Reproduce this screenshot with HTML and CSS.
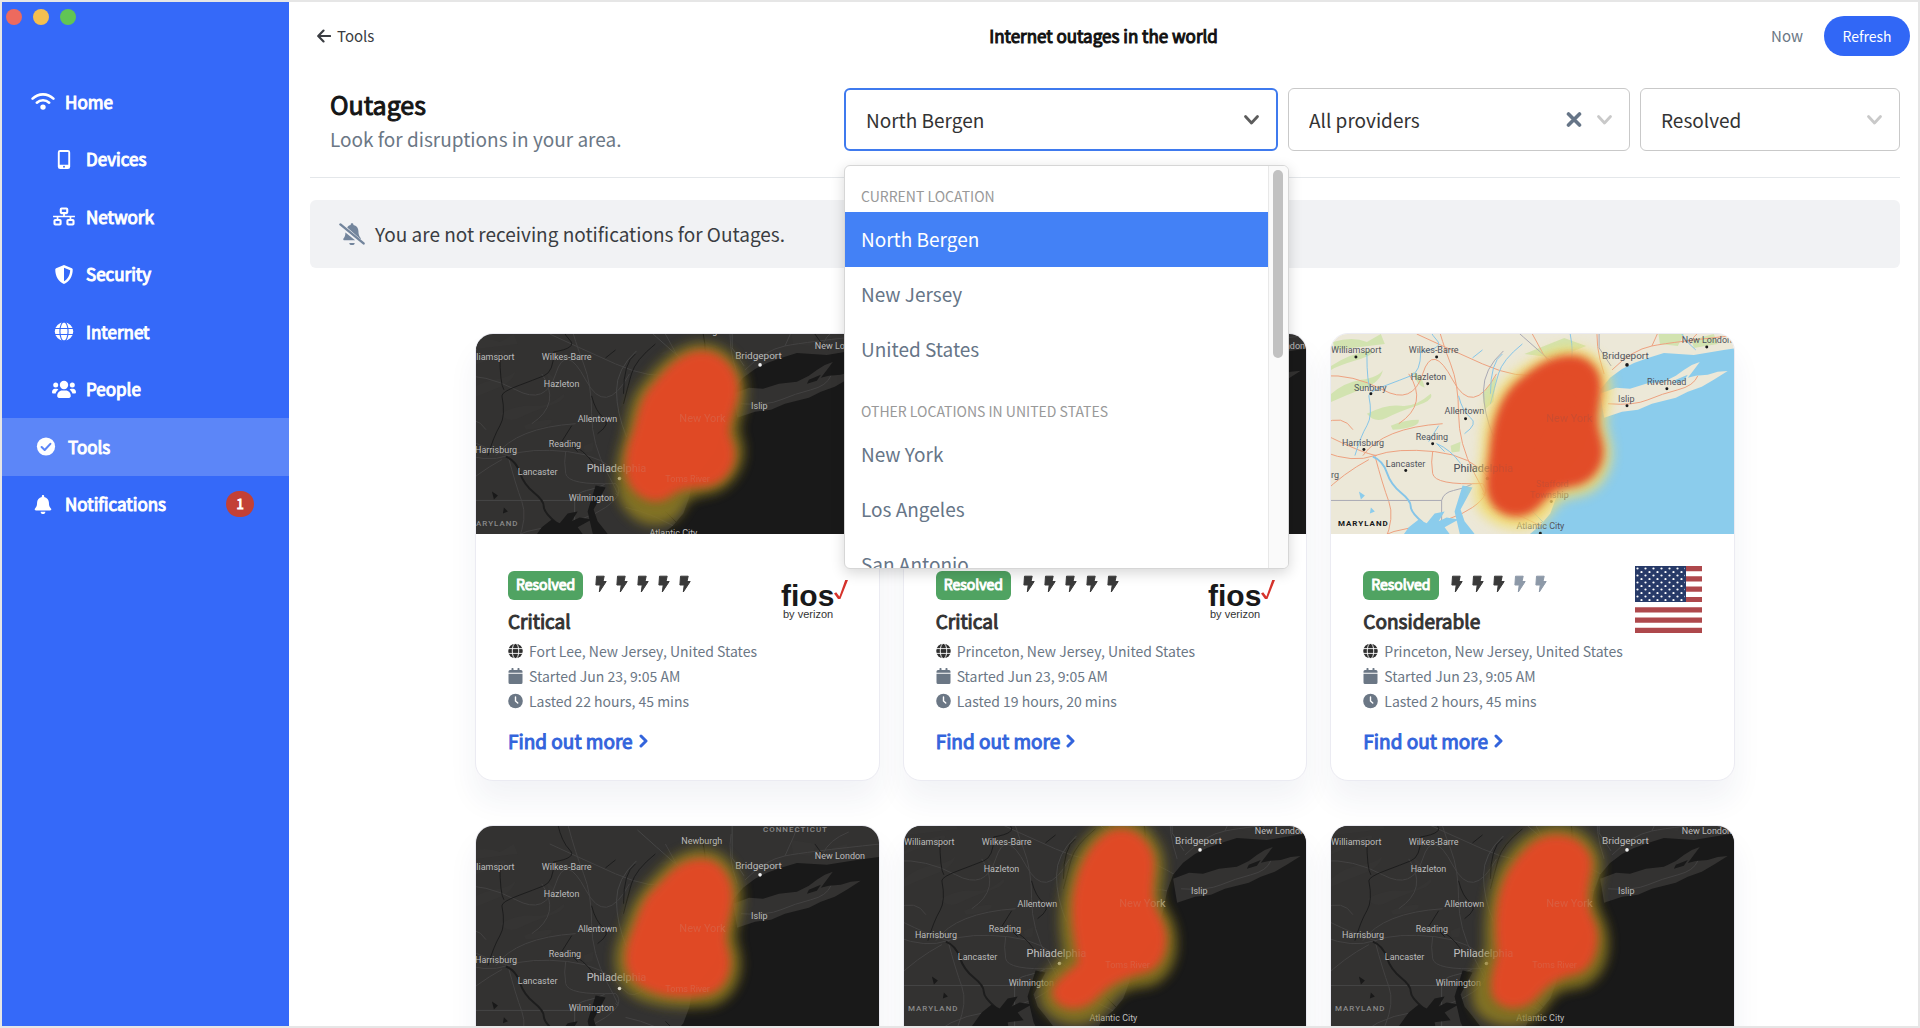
FILE: index.html
```html
<!DOCTYPE html>
<html lang="en">
<head>
<meta charset="utf-8">
<meta name="viewport" content="width=device-width, initial-scale=1">
<title>Internet outages in the world</title>
<link rel="stylesheet" href="styles.css">
</head>
<body>
<svg class="defs" width="0" height="0" aria-hidden="true">
  <defs>
    <symbol id="i-wifi" viewBox="0 0 24 18"><g fill="none" stroke="currentColor" stroke-width="2.6" stroke-linecap="round"><path d="M1.6 6.2C7.4.4 16.6.4 22.4 6.2"/><path d="M5.8 10.2c3.5-3.3 8.900-3.300 12.400 0"/></g><circle cx="12" cy="14.600" r="2.700" fill="currentColor"/></symbol>
    <symbol id="i-phone" viewBox="0 0 14 20"><path fill="currentColor" fill-rule="evenodd" d="M3 0h8a2.500 2.500 0 0 1 2.500 2.500v15A2.500 2.500 0 0 1 11 20H3a2.500 2.500 0 0 1-2.500-2.500v-15A2.500 2.500 0 0 1 3 0zm-.5 2v13.500h9V2zM7 16.700a1 1 0 1 0 0 2 1 1 0 0 0 0-2z"/></symbol>
    <symbol id="i-network" viewBox="0 0 24 20"><g fill="none" stroke="currentColor" stroke-width="2.200"><rect x="8.600" y="1.600" width="6.800" height="4.800" rx=".8"/><rect x="2" y="13.600" width="6.400" height="4.800" rx=".8"/><rect x="15.600" y="13.600" width="6.400" height="4.800" rx=".8"/><path stroke-width="1.800" d="M.5 10h23M12 6.500V10M5.200 10v3.600M18.800 10v3.600"/></g></symbol>
    <symbol id="i-shield" viewBox="0 0 20 20"><path fill="currentColor" fill-rule="evenodd" d="M10 0l8.300 3.500c.5.200.9.700.9 1.300C19.200 12 15.700 17.700 10 20 4.300 17.700.8 12 .8 4.800c0-.6.4-1.100.9-1.300zm0 2.900v14.200c3.700-1.900 6.300-6 6.500-11.500z"/></symbol>
    <symbol id="i-globe" viewBox="0 0 20 20"><circle cx="10" cy="10" r="9.700" fill="currentColor"/><path fill="none" stroke="var(--icon-gap)" stroke-width="1.200" d="M0 6.800h20M0 13.200h20"/><ellipse cx="10" cy="10" rx="4.300" ry="10.200" fill="none" stroke="var(--icon-gap)" stroke-width="1.200"/></symbol>
    <symbol id="i-people" viewBox="0 0 24 18"><g fill="currentColor"><circle cx="12" cy="4.500" r="4.200"/><circle cx="3.700" cy="4.500" r="2.500"/><circle cx="20.300" cy="4.500" r="2.500"/><path d="M5.200 15.600c0-3.300 2.200-5.600 5-5.600h3.600c2.800 0 5 2.300 5 5.600 0 1-.8 1.900-1.800 1.900H7c-1 0-1.800-.9-1.800-1.900zM0 11.800c0-2 1.300-3.500 3-3.500h1.600c.7 0 1.300.2 1.800.6-1.500 1.200-2.500 2.700-2.800 4.200H1.300C.6 13.100 0 12.500 0 11.800zM24 11.800c0-2-1.300-3.500-3-3.500h-1.600c-.7 0-1.300.2-1.800.6 1.500 1.200 2.500 2.700 2.800 4.200h2.300c.7 0 1.300-.6 1.300-1.300z"/></g></symbol>
    <symbol id="i-check" viewBox="0 0 20 20"><circle cx="10" cy="10" r="9.600" fill="currentColor"/><path d="M5.400 10.600l3.200 3.100 6-6.500" fill="none" stroke="var(--icon-gap)" stroke-width="2.200" stroke-linecap="round" stroke-linejoin="round"/></symbol>
    <symbol id="i-bell" viewBox="0 0 448 512"><path fill="currentColor" d="M224 512c35.320 0 63.970-28.650 63.970-64H160.030c0 35.350 28.650 64 63.970 64zm215.390-149.710c-19.320-20.760-55.470-51.990-55.470-154.290 0-77.700-54.480-139.900-127.940-155.160V32c0-17.670-14.320-32-31.980-32s-31.980 14.330-31.980 32v20.840C118.560 68.100 64.080 130.300 64.080 208c0 102.300-36.150 133.530-55.470 154.290-6 6.450-8.660 14.160-8.610 21.710.11 16.400 12.980 32 32.100 32h383.800c19.120 0 32-15.600 32.100-32 .05-7.550-2.610-15.270-8.610-21.710z"/></symbol>
    <symbol id="i-bell-off" viewBox="0 0 26 22"><g fill="currentColor"><path d="M10.300 20h5.400a2.700 2.200 0 0 1-5.400 0zM6.400 9.500l9.700 7.700H5.400c-.9 0-1.500-1-.9-1.700 1-1.300 1.900-2.600 1.900-6zM13 .2c.8 0 1.400.5 1.400 1.300v.6c3 .6 5 3 5 6 0 3.400.8 5.200 2 6.600.4.500.5 1 .3 1.500L8.200 4.500c.9-1.200 2-2.100 3.500-2.400v-.6c0-.8.500-1.300 1.300-1.300z"/><path d="M1.400 1.400l23.200 19" fill="none" stroke="currentColor" stroke-width="2.400" stroke-linecap="round"/></g></symbol>
    <symbol id="i-calendar" viewBox="0 0 14 16"><path fill="currentColor" d="M0 5.800h14v8.700a1.500 1.500 0 0 1-1.500 1.500h-11A1.500 1.500 0 0 1 0 14.500zM0 4.800V3.500A1.500 1.500 0 0 1 1.500 2H3V.6A.6.600 0 0 1 3.600 0h.8a.6.600 0 0 1 .6.600V2h4V.6a.6.600 0 0 1 .6-.6h.8a.6.600 0 0 1 .6.600V2h1.500A1.500 1.500 0 0 1 14 3.500v1.300z"/></symbol>
    <symbol id="i-clock" viewBox="0 0 16 16"><circle cx="8" cy="8" r="7.800" fill="currentColor"/><path d="M8 3.600V8l2.400 2.200" fill="none" stroke="#fff" stroke-width="1.500" stroke-linecap="round"/></symbol>
    <symbol id="i-bolt" viewBox="0 0 12 18"><path fill="currentColor" stroke="currentColor" stroke-linejoin="round" stroke-width="1" d="M1.500 1.200h7.700L8 6.500h3.200L4.300 17 5.200 10H.9z"/></symbol>
    <symbol id="i-back" viewBox="0 0 15 15"><path fill="none" stroke="currentColor" stroke-width="2.300" stroke-linecap="round" stroke-linejoin="round" d="M14 7.500H2M7 1.700L1.300 7.500 7 13.300"/></symbol>
    <symbol id="i-down" viewBox="0 0 16 12"><path fill="none" stroke="currentColor" stroke-width="2.800" stroke-linecap="round" stroke-linejoin="round" d="M2 2.500l6 6.500 6-6.500"/></symbol>
    <symbol id="i-right" viewBox="0 0 10 14"><path fill="none" stroke="currentColor" stroke-width="3" stroke-linecap="round" stroke-linejoin="round" d="M2 2l5 5-5 5"/></symbol>
    <symbol id="i-x" viewBox="0 0 16 16"><path fill="none" stroke="currentColor" stroke-width="3.600" stroke-linecap="round" d="M2.500 2.500l11 11M13.500 2.500l-11 11"/></symbol>
    <symbol id="i-fios" viewBox="0 0 68 42"><text x="0" y="26" class="fios-name">fios</text><text x="2" y="38" class="fios-by">by verizon</text><path d="M53 13.500l2.200-1.200 3.200 4.200L64.200 0H67l-7.600 19h-2.400z" fill="#d6332c"/></symbol>
    <pattern id="stars" width="8" height="7" patternUnits="userSpaceOnUse"><circle cx="2.500" cy="2.500" r="1.100" fill="#fff"/><circle cx="6.500" cy="6" r="1.100" fill="#fff"/></pattern>
    <symbol id="i-flag" viewBox="0 0 67 67"><path fill="#fff" d="M0 0h67v67H0z"/><path stroke="#ae484c" stroke-width="5.200" d="M0 2.600h67M0 12.900h67M0 23.200h67M0 33.500h67M0 43.800h67M0 54.100h67M0 64.400h67"/><path fill="#273a68" d="M0 0h51v36H0z"/><path fill="url(#stars)" d="M1 0h49v35H1z"/></symbol>

    <filter id="soft" x="-30%" y="-30%" width="160%" height="160%"><feGaussianBlur stdDeviation="6"/></filter>
    <filter id="core" x="-30%" y="-30%" width="160%" height="160%"><feGaussianBlur stdDeviation="4.500"/></filter>

    <g id="geo">
      <path class="land" d="M-30-40H450V240H-30z"/>
      <g class="green">
        <path d="M-14 62q14-13 32-16t22-10q-2 12-20 19t-34 14zM-12 32q18-12 40-16 6 4-14 10t-26 10zM24 80q20-10 34-8t30-12q4 6-14 12t-30 12-20-4zM48 92q14-6 28-6 2 8-26 10zM70 38q10 4 12 16-8-2-12-16zM108 112l10-4-1 10-8 1zM140 60l14-18-3 26-9 8zM-10 8q20-6 34 0l14-8 4 10-50 6zM182 20l40-16 22 8-30 12zM316-4l26 4-6 12-18-2zM350 6l22-6 4 10-24 4z"/>
      </g>
      <g class="road">
        <path d="M-20 118q30 12 52 4t60-4 56 28 60-60M-20 100q40 20 54 22M100 90q-30 2-50 10T20 122M92-20q8 30 16 50t8 50 16 60 8 20M74 0q30 14 66 30t60 10 60 16M190 0q20 40 50 70M32 122q8 30 14 46t-4 40M-20 42q30-2 60 14t40-16 30 6 44-6M262 40q-10-30-6-50M270 36q20-20 40-24t96-12M310 12q10-20 16-40M140 150q10 10-10 24t-60 20-60 30M66 40q20 30-10 50M-20 160q20-20 46-34M182 96q50-30 70-24M262 70q40 4 62-6t36-18M90 118q-2 10 0 22t50 10M348 10q6-14 26-22M-20 90q20-10 30 6M210 200q-30-20-60-26"/>
      </g>
      <path class="border" d="M-20 167h119q2-8 12-10t18-6M99 167v50M257-40v54l12 18M162-14q20 18 36 32t24 20M161 17q-20 18-20 40t10 46"/>
      <path class="river wide" d="M30 123q10 4 14 16t14 20 10 14 12 16"/>
      <path class="river" d="M82-20q4 18 12 26t-16 12q0 20-10 24t-26 10-16 10q4 20-2 30t-12 30M24 20q0 30 4 36M180 10q-20 16-24 30t-8 30M160 20q-12 8-12 40M116 62q4 16 12 22t-6 16M86 108l10-16M102 118l-8-8q14 6 24 20M228 0q4 20 0 30M340 0q6 10 14 16M140 16l-10 8M190 178l16 16"/>
      <path class="water" d="M450 8L404 13 382 16 352 21 322 19 306 24 292 29 280 35 268 44 258 56 252 72 248 92 240 118 226 136 217 148 214 164 208 180 198 192 186 202 170 240H450z"/>
      <path class="land" d="M258 60L274 54 288 55 304 50 322 48 334 42 342 36 350 31 358 28 352 36 346 44 354 42 366 41 376 38 386 37 372 46 360 53 346 58 334 64 322 67 310 70 296 76 280 78 262 84z"/>
      <path class="water" d="M334 46l12-5-4 6-10 3zM66 194l10-8 8 4 8-10 10-2-6 10 8-4 12 2-14 8 6 8-16 2 2 12H60l-4-8zM120 152l10 2-12 22 4 12 8 10 20 26h-22l-10-20-6-26zM16 158l6 4-4 4zM28 174l4 4-5 2z"/>
      <path class="road" d="M266 70q26 2 40-4t30-10 20-14"/>
    </g>

    <g id="cities" class="labels">
      <text x="-12" y="26">Williamsport</text><text x="66" y="26">Wilkes-Barre</text><text x="68" y="53">Hazleton</text><text x="102" y="88">Allentown</text><text x="73" y="113">Reading</text><text x="-1" y="119">Harrisburg</text><text x="42" y="141">Lancaster</text><text x="93" y="168">Wilmington</text><text x="206" y="0">Newburgh</text><text x="340" y="15">New London</text><text x="276" y="75">Islip</text><text x="174" y="203">Atlantic City</text>
      <text x="190" y="149">Toms River</text>
      <text x="260" y="25" class="big">Bridgeport</text><text x="111" y="138" class="city">Philadelphia</text><text x="204" y="88" class="city">New York</text>
      <text x="-8" y="193" class="state">MARYLAND</text><text x="288" y="-12" class="state">CONNECTICUT</text>
      <circle cx="285" cy="31" r="1.800"/><circle cx="144" cy="145" r="1.800"/>
    </g>
    <g id="over" class="labels faint">
      <text x="111" y="138" class="city">Philadelphia</text><text x="204" y="88" class="city">New York</text><text x="190" y="149">Toms River</text>
    </g>
  </defs>
</svg>

<div class="window">
  <nav class="sidebar" aria-label="Main">
    <div class="lights"><span class="red"></span><span class="amber"></span><span class="green-dot"></span></div>
    <ul class="nav">
      <li><a href="#home"><svg class="ico"><use href="#i-wifi"/></svg>Home</a></li>
      <li><a href="#devices" class="sub"><svg class="ico"><use href="#i-phone"/></svg>Devices</a></li>
      <li><a href="#network" class="sub"><svg class="ico"><use href="#i-network"/></svg>Network</a></li>
      <li><a href="#security" class="sub"><svg class="ico"><use href="#i-shield"/></svg>Security</a></li>
      <li><a href="#internet" class="sub"><svg class="ico"><use href="#i-globe"/></svg>Internet</a></li>
      <li><a href="#people" class="sub"><svg class="ico"><use href="#i-people"/></svg>People</a></li>
      <li><a href="#tools" class="active" aria-current="page"><svg class="ico"><use href="#i-check"/></svg>Tools</a></li>
      <li><a href="#notifications"><svg class="ico"><use href="#i-bell"/></svg>Notifications<span class="count">1</span></a></li>
    </ul>
  </nav>

  <main class="main">
    <header class="topbar">
      <a class="back" href="#tools"><svg><use href="#i-back"/></svg>Tools</a>
      <h1>Internet outages in the world</h1>
      <div class="status"><span>Now</span><button type="button" class="refresh">Refresh</button></div>
    </header>

    <section class="content">
      <div class="toolbar">
        <div class="heading"><h2>Outages</h2><p>Look for disruptions in your area.</p></div>
        <div class="field focus">
          <select aria-label="Location"><option>North Bergen</option></select>
          <svg class="caret"><use href="#i-down"/></svg>
          <div class="menu">
            <div class="options" role="listbox" aria-label="Locations">
              <p class="group">Current location</p>
              <div role="option" class="option selected" aria-selected="true">North Bergen</div>
              <div role="option" class="option">New Jersey</div>
              <div role="option" class="option">United States</div>
              <p class="group later">Other locations in United States</p>
              <div role="option" class="option">New York</div>
              <div role="option" class="option">Los Angeles</div>
              <div role="option" class="option">San Antonio</div>
            </div>
            <div class="track"><div class="thumb"></div></div>
          </div>
        </div>
        <div class="field">
          <select aria-label="Provider"><option>All providers</option></select>
          <button type="button" class="clear" aria-label="Clear provider"><svg><use href="#i-x"/></svg></button>
          <svg class="caret"><use href="#i-down"/></svg>
        </div>
        <div class="field">
          <select aria-label="State"><option>Resolved</option></select>
          <svg class="caret"><use href="#i-down"/></svg>
        </div>
      </div>

      <div class="notice"><svg><use href="#i-bell-off"/></svg>You are not receiving notifications for Outages.</div>

      <div class="cards">
        <article class="card">
          <svg class="map" viewBox="0 0 404 201" preserveAspectRatio="xMidYMid slice">
            <use href="#geo"/><use href="#cities"/>
            <path class="halo" d="M226 18C250 18 264 40 262 62 260 84 250 90 258 108 264 126 252 148 232 152 214 155 206 158 200 172 192 186 170 186 158 172 146 160 148 130 156 108 162 84 160 68 178 50 194 30 210 18 226 18z"/>
            <path class="heat" d="M226 20C246 20 262 38 260 60 258 78 246 92 254 108 262 128 250 146 232 150 212 152 204 152 194 160 184 168 168 166 158 152 150 140 152 118 160 100 166 80 166 66 182 50 196 32 210 20 226 20z"/>
            <use href="#over"/>
          </svg>
          <div class="body">
            <svg class="logo"><use href="#i-fios"/></svg>
            <div class="tags"><span class="badge">Resolved</span><svg class="bolt"><use href="#i-bolt"/></svg><svg class="bolt"><use href="#i-bolt"/></svg><svg class="bolt"><use href="#i-bolt"/></svg><svg class="bolt"><use href="#i-bolt"/></svg><svg class="bolt"><use href="#i-bolt"/></svg></div>
            <h3>Critical</h3>
            <ul class="facts"><li><svg class="dark"><use href="#i-globe"/></svg>Fort Lee, New Jersey, United States</li><li><svg><use href="#i-calendar"/></svg>Started Jun 23, 9:05 AM</li><li><svg><use href="#i-clock"/></svg>Lasted 22 hours, 45 mins</li></ul>
            <a class="more" href="#more">Find out more<svg><use href="#i-right"/></svg></a>
          </div>
        </article>

        <article class="card">
          <svg class="map" viewBox="0 0 404 201" preserveAspectRatio="xMidYMid slice">
            <g transform="translate(12)"><use href="#geo"/><use href="#cities"/></g>
          </svg>
          <div class="body">
            <svg class="logo"><use href="#i-fios"/></svg>
            <div class="tags"><span class="badge">Resolved</span><svg class="bolt"><use href="#i-bolt"/></svg><svg class="bolt"><use href="#i-bolt"/></svg><svg class="bolt"><use href="#i-bolt"/></svg><svg class="bolt"><use href="#i-bolt"/></svg><svg class="bolt"><use href="#i-bolt"/></svg></div>
            <h3>Critical</h3>
            <ul class="facts"><li><svg class="dark"><use href="#i-globe"/></svg>Princeton, New Jersey, United States</li><li><svg><use href="#i-calendar"/></svg>Started Jun 23, 9:05 AM</li><li><svg><use href="#i-clock"/></svg>Lasted 19 hours, 20 mins</li></ul>
            <a class="more" href="#more">Find out more<svg><use href="#i-right"/></svg></a>
          </div>
        </article>

        <article class="card">
          <svg class="map light labels" viewBox="0 0 404 201" preserveAspectRatio="xMidYMid slice">
            <use href="#geo" x="12"/>
            <text x="0" y="19">Williamsport</text><text x="78" y="19">Wilkes-Barre</text><text x="80" y="46">Hazleton</text><text x="23" y="57">Sunbury</text><text x="114" y="80">Allentown</text><text x="85" y="106">Reading</text><text x="11" y="112">Harrisburg</text><text x="55" y="133">Lancaster</text><text x="0" y="144">rg</text><text x="352" y="9">New London</text><text x="317" y="51">Riverhead</text><text x="288" y="68">Islip</text><text x="206" y="154">Stafford</text><text x="200" y="165">Township</text><text x="186" y="196">Atlantic City</text>
            <text x="272" y="25" class="big">Bridgeport</text><text x="123" y="138" class="city">Philadelphia</text><text x="216" y="88" class="city">New York</text><text x="7" y="193" class="state">MARYLAND</text>
            <g><circle cx="25" cy="23" r="1.500"/><circle cx="106" cy="23" r="1.500"/><circle cx="97" cy="50" r="1.500"/><circle cx="40" cy="60" r="1.500"/><circle cx="135" cy="85" r="1.500"/><circle cx="102" cy="110" r="1.500"/><circle cx="33" cy="116" r="1.500"/><circle cx="75" cy="137" r="1.500"/><circle cx="157" cy="145" r="1.800"/><circle cx="297" cy="31" r="1.800"/><circle cx="377" cy="13" r="1.500"/><circle cx="337" cy="55" r="1.500"/><circle cx="297" cy="72" r="1.500"/><circle cx="221" cy="168" r="1.500"/><circle cx="210" cy="200" r="1.500"/></g>
            <path class="halo" d="M240 22C262 22 274 40 272 60 270 80 264 84 270 104 278 126 268 150 246 154 228 156 222 162 212 176 202 192 174 190 158 174 146 160 160 140 160 116 160 90 166 66 184 50 204 34 222 22 240 22z"/>
            <path class="heat" d="M240 24C260 24 270 40 268 58 266 78 262 86 268 104 276 128 262 146 244 150 226 152 218 158 208 170 196 184 176 184 164 170 154 156 160 138 162 116 164 90 170 68 186 52 206 34 222 24 240 24z"/>
            <g class="faint"><text x="123" y="138" class="city">Philadelphia</text><text x="216" y="88" class="city">New York</text><text x="206" y="154">Stafford</text><text x="200" y="165">Township</text></g>
          </svg>
          <div class="body">
            <svg class="flag"><use href="#i-flag"/></svg>
            <div class="tags"><span class="badge">Resolved</span><svg class="bolt"><use href="#i-bolt"/></svg><svg class="bolt"><use href="#i-bolt"/></svg><svg class="bolt"><use href="#i-bolt"/></svg><svg class="bolt off"><use href="#i-bolt"/></svg><svg class="bolt off"><use href="#i-bolt"/></svg></div>
            <h3>Considerable</h3>
            <ul class="facts"><li><svg class="dark"><use href="#i-globe"/></svg>Princeton, New Jersey, United States</li><li><svg><use href="#i-calendar"/></svg>Started Jun 23, 9:05 AM</li><li><svg><use href="#i-clock"/></svg>Lasted 2 hours, 45 mins</li></ul>
            <a class="more" href="#more">Find out more<svg><use href="#i-right"/></svg></a>
          </div>
        </article>

        <article class="card">
          <svg class="map" viewBox="0 0 404 201" preserveAspectRatio="xMidYMid slice">
            <g transform="translate(0 18)"><use href="#geo"/><use href="#cities"/></g>
            <path class="halo" d="M226 32C248 32 260 54 258 78 256 100 248 104 254 122 262 146 252 168 232 172 212 174 190 174 168 166 146 156 144 132 154 110 162 88 166 76 180 62 196 44 208 32 226 32z"/>
            <path class="heat" d="M226 36C244 36 256 54 254 76 252 98 244 106 250 124 256 144 248 162 232 166 212 170 188 170 170 160 150 150 150 130 158 110 166 90 168 76 184 62 198 46 208 36 226 36z"/>
            <use href="#over" y="18"/>
          </svg>
        </article>
        <article class="card">
          <svg class="map" viewBox="0 0 404 201" preserveAspectRatio="xMidYMid slice">
            <g transform="translate(12 -7)"><use href="#geo"/><use href="#cities"/></g>
            <path class="halo" d="M218 2C240 2 254 24 252 46 250 66 246 74 258 92 270 112 266 146 244 152 222 154 212 158 200 174 188 194 158 196 146 176 138 156 160 144 170 132 166 112 162 88 170 60 176 30 196 2 218 2z"/>
            <path class="heat" d="M218 6C236 6 250 24 248 44 246 66 244 74 254 92 266 112 260 138 242 144 218 150 206 156 194 168 180 184 158 184 152 170 150 158 166 150 178 138 174 114 168 88 174 62 180 32 198 6 218 6z"/>
            <use href="#over" x="12" y="-7"/>
          </svg>
        </article>
        <article class="card">
          <svg class="map" viewBox="0 0 404 201" preserveAspectRatio="xMidYMid slice">
            <g transform="translate(12 -7)"><use href="#geo"/><use href="#cities"/></g>
            <path class="halo" d="M226 8C252 8 266 28 262 48 258 68 254 74 264 94 276 118 268 152 244 154 226 156 220 160 210 174 200 194 170 198 154 182 144 164 156 144 164 126 162 96 164 66 178 42 192 20 206 8 226 8z"/>
            <path class="heat" d="M226 12C248 12 262 28 258 46 254 66 252 76 260 94 270 114 262 142 244 146 226 150 218 156 208 166 196 182 176 184 166 172 160 160 166 146 170 128 166 98 168 68 182 44 196 24 208 12 226 12z"/>
            <use href="#over" x="12" y="-7"/>
          </svg>
        </article>
      </div>
    </section>
  </main>
</div>
</body>
</html>
```
FILE: styles.css
```css
* { box-sizing: border-box; }

body {
  margin: 0;
  background: #fff;
  color: #3a3d42;
  font: 16px/24px "Noto Sans CJK SC", "Noto Sans", sans-serif;
}

h1, h2, h3, p, ul { margin: 0; padding: 0; font-weight: 400; }
ul { list-style: none; }
a { color: inherit; text-decoration: none; }
button, select { font: inherit; cursor: pointer; }
.defs { position: absolute; }

/* Headings and links are the regular face, thickened with an outline */
.nav a, .topbar h1, .heading h2, .badge, .body h3, .more { -webkit-text-stroke: 1px currentColor; }

.window {
  display: grid;
  grid-template-columns: 287px minmax(0, 1fr);
  height: 100vh;
  border: 2px solid #e6e6e6;
  overflow: hidden;
}

/* Sidebar */
.sidebar { background: #3569f9; color: #fff; --icon-gap: #3569f9; }
.lights { display: flex; gap: 11px; padding: 7px 4px 0; height: 71px; }
.lights span { width: 16px; height: 16px; border-radius: 50%; }
.red { background: #ed6a5e; }
.amber { background: #f5bf4f; }
.green-dot { background: #61c554; }
.nav { display: grid; grid-auto-rows: 1fr; height: 460px; }
.nav li { display: grid; }
.nav a { display: flex; align-items: center; gap: 10px; padding: 0 35px 0 29px; font-size: 17px; }
.nav .sub { padding-left: 50px; }
.nav .active { padding-left: 32px; background: #5c86f8; --icon-gap: #5c86f8; }
.ico { width: 24px; height: 19px; }
.count { margin-left: auto; width: 28px; height: 26px; border-radius: 13px; background: #c34035; font-size: 13px; line-height: 26px; text-align: center; }

/* Top bar */
.main { overflow: hidden; }
.topbar { display: grid; grid-template-columns: 1fr auto 1fr; align-items: center; height: 67px; padding: 0 8px; }
.topbar h1 { font-size: 17px; color: #111; }
.back { display: flex; align-items: center; gap: 6px; padding-left: 20px; font-size: 15px; }
.back svg { width: 14px; height: 14px; }
.status { display: flex; justify-content: flex-end; align-items: center; gap: 21px; font-size: 15px; color: #6b7785; }
.refresh { width: 86px; height: 40px; border: 0; border-radius: 20px; background: #3167f6; color: #fff; font-size: 14px; }

/* Filters */
.content { padding: 19px 18px 0 21px; }
.toolbar { display: grid; grid-template-columns: minmax(0, 1fr) 434px 342px 260px; gap: 10px; align-items: start; padding-bottom: 19px; border-bottom: 1px solid #e4e7ea; }
.heading { padding-left: 20px; }
.heading h2 { font-size: 25px; line-height: 32px; color: #151515; }
.heading p { font-size: 19px; line-height: 38px; color: #6b7785; }
.field { position: relative; display: flex; align-items: center; height: 63px; padding-right: 16px; border: 1px solid #c9c9c9; border-radius: 6px; }
.field.focus { border: 2px solid #3f7aee; }
.field select { flex: 1; min-width: 0; height: 100%; padding: 0 20px; border: 0; background: none; appearance: none; color: #333; font-size: 19px; line-height: 32px; outline: 0; }
.caret { width: 17px; height: 12px; color: #c9c9c9; }
.focus .caret { color: #5c5c5c; }
.clear { display: flex; padding: 0; margin-right: 14px; border: 0; background: none; color: #667587; }
.clear svg { width: 16px; height: 17px; }

/* Location menu */
.menu { position: absolute; z-index: 2; top: 75px; left: -2px; width: 445px; height: 404px; display: grid; grid-template-columns: minmax(0, 1fr) 20px; background: #fff; border: 1px solid #d6d6d6; border-radius: 6px; box-shadow: 0 4px 14px rgba(0, 0, 0, .16); overflow: hidden; }
.options { overflow: hidden; }
.group { padding: 18px 16px 4px; font-size: 14px; line-height: 24px; text-transform: uppercase; color: #999; }
.group.later { padding-top: 22px; }
.option { height: 55px; padding: 0 16px; font-size: 19px; line-height: 54px; color: #667587; }
.selected { background: #4381f6; color: #fff; }
.track { padding: 4px; border-left: 1px solid #e8e8e8; background: #fafafa; }
.thumb { width: 10px; height: 188px; border-radius: 5px; background: #c1c1c1; }

.notice { display: flex; align-items: center; gap: 10px; height: 68px; margin: 22px 0 65px; padding: 0 29px; border-radius: 6px; background: #f1f2f4; font-size: 19px; }
.notice svg { width: 26px; height: 22px; color: #73859c; }

/* Cards */
.cards { display: grid; grid-template-columns: repeat(3, minmax(0, 1fr)); grid-auto-rows: 1fr; gap: 44px 23px; max-width: 1260px; margin: 0 auto; }
.card { border: 1px solid #ebebf2; border-radius: 18px; background: #fff; box-shadow: 0 20px 30px rgba(40, 50, 100, .06); overflow: hidden; }
.map { display: block; width: 100%; height: auto; }
.body { display: flow-root; padding: 37px 32px 23px; --icon-gap: #fff; }
.logo { float: right; width: 68px; height: 42px; margin: 9px -2px 0 0; }
.flag { float: right; width: 67px; height: 67px; margin-top: -5px; }
.tags { display: flex; align-items: flex-start; gap: 9px; }
.badge { height: 29px; margin-right: 3px; padding: 0 8px; border-radius: 6px; background: #50a362; color: #fff; font-size: 14px; line-height: 27px; }
.bolt { width: 12px; height: 18px; margin-top: 4px; color: #3a3a3a; }
.bolt.off { color: #8d99a8; }
.body h3 { margin-top: 6px; font-size: 19px; line-height: 30px; color: #333; }
.facts { padding-top: 2px; }
.facts li { display: flex; align-items: center; gap: 6px; height: 25px; font-size: 14px; color: #6b7785; }
.facts svg { width: 15px; height: 16px; }
.facts .dark { color: #2f2f2f; }
.more { display: inline-flex; align-items: center; gap: 6px; margin-top: 12px; font-size: 19px; line-height: 32px; color: #3364dc; }
.more svg { width: 10px; height: 14px; }

.fios-name { font: bold 30px "Liberation Sans", Arial, sans-serif; fill: #191919; }
.fios-by { font: 11px "Liberation Sans", Arial, sans-serif; fill: #333; }

/* Maps */
.map { --land: #333231; --water: #191919; --road: #434242; --border: #464646; --green: #353433; --river: #1d1d1d; --label: #bdbdbd; --dot: #f1f1f1; --state: #8a8a8a; --halo: #8f7d22; }
.map.light { --land: #ece8d8; --water: #8bccec; --road: #eda17f; --border: #a9a9b4; --green: #d2e3b0; --river: #86c5e8; --label: #50535c; --dot: #17181a; --state: #17181a; --halo: #f0dc6e; }
.land { fill: var(--land); }
.water { fill: var(--water); }
.green { fill: var(--green); }
.road { fill: none; stroke: var(--road); }
.border { fill: none; stroke: var(--border); }
.river { fill: none; stroke: var(--river); stroke-width: 1; }
.river.wide { stroke-width: 2; }
.labels text { font: 9px Roboto, sans-serif; fill: var(--label); }
.labels .big { font-size: 10px; }
.labels .city { font-size: 11px; }
.labels .state { font-size: 8px; font-weight: 500; letter-spacing: 1px; fill: var(--state); }
.light .state { font-weight: 700; }
.labels circle { fill: var(--dot); }
.faint { opacity: .16; }
.halo { fill: var(--halo); stroke: var(--halo); stroke-width: 18; filter: url(#soft); opacity: .86; }
.heat { fill: #e24a26; stroke: #e24a26; stroke-width: 6; filter: url(#core); opacity: .98; }
```
